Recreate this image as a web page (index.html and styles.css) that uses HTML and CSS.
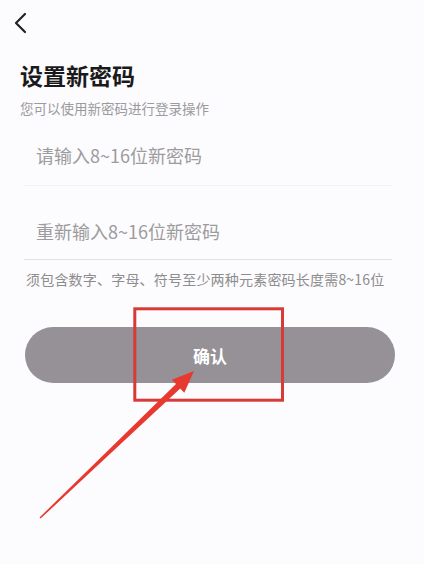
FILE: index.html
```html
<!DOCTYPE html>
<html lang="zh-CN">
<head>
<meta charset="utf-8">
<title>设置新密码</title>
<link rel="stylesheet" href="styles.css">
</head>
<body>
<div class="page">
  <div class="topbar">
    <svg class="back" width="40" height="46" viewBox="0 0 40 46">
      <polyline points="25,14 16,23 25,32" fill="none" stroke="#222" stroke-width="2.2" stroke-linecap="round" stroke-linejoin="round"/>
    </svg>
  </div>
  <h1 class="title">设置新密码</h1>
  <p class="subtitle">您可以使用新密码进行登录操作</p>
  <div class="form">
    <div class="field field-first"><span class="placeholder">请输入8~16位新密码</span></div>
    <div class="field field-second"><span class="placeholder">重新输入8~16位新密码</span></div>
    <p class="hint">须包含数字、字母、符号至少两种元素密码长度需8~16位</p>
  </div>
  <button class="confirm">确认</button>
  <svg class="annotation" width="424" height="564" viewBox="0 0 424 564">
    <rect x="134.8" y="308.8" width="147.7" height="91.4" fill="none" stroke="#d63b37" stroke-width="3"/>
    <polygon points="39.5,517.5 176,384 171.9,379.7 194,371 184.3,392.7 180.2,388.4 40.6,518.6" fill="#e8392f"/>
  </svg>
</div>
</body>
</html>
```
FILE: styles.css
```css
html, body {
  margin: 0;
  padding: 0;
  background: #fcfbfd;
}
body {
  font-family: "Noto Sans CJK SC", "Noto Sans", sans-serif;
  color: #1e1e1e;
}
.page {
  position: relative;
  width: 424px;
  height: 564px;
  overflow: hidden;
}
.topbar {
  height: 46px;
}
.back {
  display: block;
}
.title {
  margin: 18px 0 0 20px;
  font-size: 23px;
  line-height: 23px;
  font-weight: 700;
  color: #1a1a1a;
}
.subtitle {
  margin: 15px 0 0 20px;
  font-size: 13.5px;
  line-height: 13px;
  color: #9b9a9c;
}
.form {
  margin-left: 24px;
  width: 368px;
}
.field {
  padding-left: 12px;
  font-size: 18px;
  line-height: 18px;
  color: #9c9b9d;
}
.field-first {
  padding-top: 31px;
  height: 39px;
  border-bottom: 1px solid #f3f1f5;
}
.field-second {
  padding-top: 36px;
  height: 37px;
  border-bottom: 1px solid #e4e2e6;
}
.placeholder {
  display: block;
}
.hint {
  margin: 12px 0 0 2px;
  font-size: 14px;
  line-height: 14px;
  letter-spacing: 0.2px;
  color: #8d8c8e;
  white-space: nowrap;
}
.confirm {
  display: block;
  margin: 41px 0 0 25px;
  width: 370px;
  height: 56px;
  border: none;
  border-radius: 28px;
  background: #959196;
  color: #ffffff;
  font-family: "Noto Sans CJK SC", "Noto Sans", sans-serif;
  font-size: 17px;
  font-weight: 700;
  padding: 0;
}
.annotation {
  position: absolute;
  left: 0;
  top: 0;
  pointer-events: none;
}
```
